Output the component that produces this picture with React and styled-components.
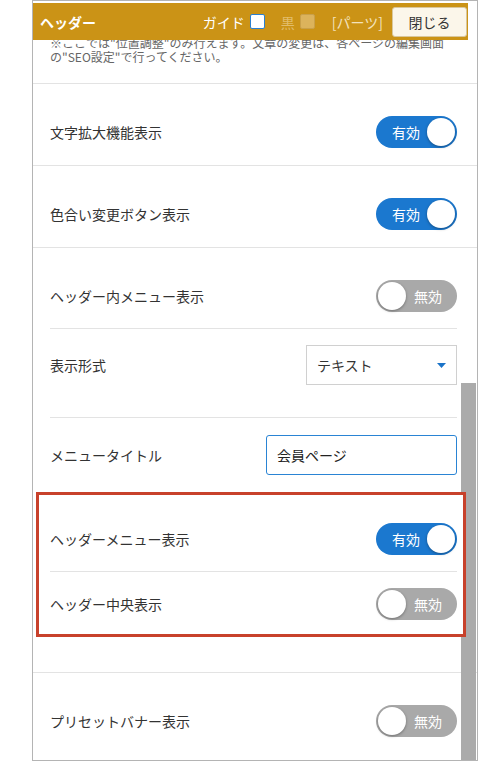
import styled, { createGlobalStyle } from "styled-components";

const GlobalStyle = createGlobalStyle`
  html, body {
    margin: 0;
    padding: 0;
    background: #fff;
    font-family: "Noto Sans CJK JP", "Noto Sans", sans-serif;
  }
`;

const Frame = styled.div`
  position: relative;
  margin-left: 32px;
  width: 446px;
  height: 761px;
  box-sizing: border-box;
  border: 1px solid #b4b4b4;
  display: flex;
  flex-direction: column;
  overflow: hidden;
  background: #fff;
`;

const Header = styled.div`
  margin-top: 2px;
  margin-right: 9px;
  height: 37px;
  flex-shrink: 0;
  background: #cb9316;
  display: flex;
  align-items: center;
  padding: 0 1px 0 7px;
  position: relative;
  z-index: 2;
`;

const Title = styled.div`
  color: #fff;
  font-weight: bold;
  font-size: 14px;
  flex: 1;
`;

const Tool = styled.span`
  font-size: 14px;
  color: ${(p) => p.color};
  display: flex;
  align-items: center;
  gap: 5px;
  margin-right: ${(p) => p.gap}px;
`;

const Check = styled.span`
  width: 13px;
  height: 13px;
  border-radius: 2px;
  background: ${(p) => (p.faded ? "#dcb35c" : "#fff")};
  border: 1px solid ${(p) => (p.faded ? "#c9a04a" : "#2a7fd0")};
`;

const CloseButton = styled.button`
  width: 75px;
  height: 30px;
  background: #fbf6ea;
  border: 1px solid #d9c79c;
  border-radius: 3px;
  font-family: inherit;
  font-size: 14px;
  color: #333;
  padding: 0;
`;

const Body = styled.div`
  flex: 1;
  overflow: hidden;
`;

const Note = styled.p`
  margin: -4px 0 0;
  padding: 0 20px 19px 17px;
  font-size: 12px;
  line-height: 14px;
  color: #666;
`;

const Section = styled.div`
  border-top: 1px solid #e3e3e3;
  padding: 16px 20px ${(p) => p.bottom || 1}px 17px;
`;

const Row = styled.div`
  display: flex;
  align-items: center;
  justify-content: space-between;
  padding: ${(p) => p.top ?? 16}px 0 ${(p) => p.bottom ?? 16}px;
  border-bottom: ${(p) => (p.line ? "1px solid #e3e3e3" : "none")};
`;

const Label = styled.span`
  font-size: 14px;
  color: #333;
`;

const Switch = styled.div`
  width: 81px;
  height: 32px;
  border-radius: 16px;
  box-sizing: border-box;
  background: ${(p) => (p.on ? "#1b78cf" : "#a9a9a9")};
  display: flex;
  flex-direction: ${(p) => (p.on ? "row" : "row-reverse")};
  align-items: center;
  justify-content: space-between;
  padding: 0 2px 0 ${(p) => (p.on ? 16 : 2)}px;
  ${(p) => (!p.on ? "padding-right: 15px;" : "")}
`;

const SwitchText = styled.span`
  color: #fff;
  font-size: 14px;
`;

const Knob = styled.span`
  width: 28px;
  height: 28px;
  border-radius: 50%;
  background: #fff;
  box-shadow: 0 1px 3px rgba(0, 0, 0, 0.35);
`;

const SelectBox = styled.div`
  width: 151px;
  height: 40px;
  box-sizing: border-box;
  border: 1px solid #d0d0d0;
  display: flex;
  align-items: center;
  justify-content: space-between;
  padding: 0 10px 0 10px;
  font-size: 14px;
  color: #333;
`;

const TextBox = styled.div`
  width: 191px;
  height: 40px;
  box-sizing: border-box;
  border: 1px solid #2a84d4;
  border-radius: 3px;
  display: flex;
  align-items: center;
  padding: 0 10px;
  font-size: 14px;
  color: #222;
`;

const Highlight = styled.div`
  position: relative;
  z-index: 1;
  background: #fff;
  border: 3px solid #c8412b;
  margin: 1px -9px 0 -14px;
  padding: 12px 6px 0 11px;
`;

const Scrollbar = styled.div`
  position: absolute;
  right: 1px;
  top: 382px;
  bottom: 0;
  width: 15px;
  background: #ababab;
`;

const Toggle = ({ on }) => (
  <Switch on={on}>
    <SwitchText>{on ? "有効" : "無効"}</SwitchText>
    <Knob />
  </Switch>
);

function App() {
  return (
    <>
      <GlobalStyle />
      <Frame>
        <Header>
          <Title>ヘッダー</Title>
          <Tool color="#fff" gap={16}>
            ガイド <Check />
          </Tool>
          <Tool color="#e2bd6c" gap={17}>
            黒 <Check faded />
          </Tool>
          <Tool color="#f3e2bd" gap={9}>
            [パーツ]
          </Tool>
          <CloseButton>閉じる</CloseButton>
        </Header>
        <Body>
          <Note>
            ※ここでは"位置調整"のみ行えます。文章の変更は、各ページの編集画面の"SEO設定"で行ってください。
          </Note>
          <Section>
            <Row>
              <Label>文字拡大機能表示</Label>
              <Toggle on />
            </Row>
          </Section>
          <Section>
            <Row>
              <Label>色合い変更ボタン表示</Label>
              <Toggle on />
            </Row>
          </Section>
          <Section bottom={35}>
            <Row line>
              <Label>ヘッダー内メニュー表示</Label>
              <Toggle />
            </Row>
            <Row line bottom={32}>
              <Label>表示形式</Label>
              <SelectBox>
                テキスト
                <svg width="9" height="5" viewBox="0 0 9 5">
                  <path d="M0 0h9L4.5 5z" fill="#1a73c8" />
                </svg>
              </SelectBox>
            </Row>
            <Row top={17}>
              <Label>メニュータイトル</Label>
              <TextBox>会員ページ</TextBox>
            </Row>
            <Highlight>
              <Row line>
                <Label>ヘッダーメニュー表示</Label>
                <Toggle on />
              </Row>
              <Row bottom={14}>
                <Label>ヘッダー中央表示</Label>
                <Toggle />
              </Row>
            </Highlight>
          </Section>
          <Section>
            <Row>
              <Label>プリセットバナー表示</Label>
              <Toggle />
            </Row>
          </Section>
        </Body>
        <Scrollbar />
      </Frame>
    </>
  );
}

export default App;
